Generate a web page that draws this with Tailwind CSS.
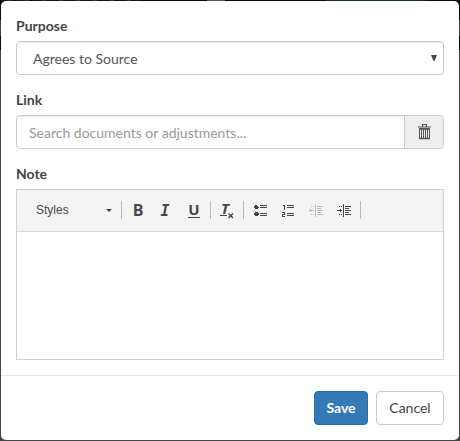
<!DOCTYPE html>
<html lang="en">
<head>
<meta charset="utf-8">
<title>Edit reference</title>
<script src="https://cdn.jsdelivr.net/npm/@tailwindcss/browser@4"></script>
</head>
<body class="h-[441px] w-[460px] overflow-hidden bg-[linear-gradient(#09090f_0_20px,#454547_20px_36px,#09090f_36px_50px,#454547_50px)] p-px font-[Lato,sans-serif] text-[14px] leading-5 text-[#444]">
<div class="absolute left-[326px] top-0 h-px w-[99px] bg-[#172c47]"></div>
<div class="absolute left-0 top-0 h-px w-[141px] bg-[repeating-linear-gradient(90deg,#15151b_0_8px,#3b3538_8px_12px,#101018_12px_17px)]"></div>
<div class="absolute left-[207px] top-0 h-px w-[18px] bg-[#555]"></div>
<main class="flex h-[439px] w-[458px] flex-col rounded-[5px] bg-white">
  <div class="flex h-[374px] flex-col px-[15px] pt-[15px]">
    <label class="h-[25px] font-bold">Purpose</label>
    <div class="flex h-[34px] shrink-0 items-center justify-between rounded border border-[#ccc] pl-4 pr-[6px] text-[14px] text-[#555] shadow-[inset_0_1px_1px_rgba(0,0,0,.075)]">
      <span class="pt-px">Agrees to Source</span>
      <svg class="-mt-px h-[6px] w-[6px]" viewBox="0 0 6 6" fill="#444"><path d="M0 0h6L3.5 6h-1z"/></svg>
    </div>
    <label class="mt-[15px] h-[25px] font-bold">Link</label>
    <div class="flex h-[34px] shrink-0 overflow-hidden rounded border border-[#ccc] text-[14px] shadow-[inset_0_1px_1px_rgba(0,0,0,.075)]">
      <span class="flex flex-1 items-center pl-3 pt-px text-[#999]">Search documents or adjustments...</span>
      <button class="flex w-[39px] items-center justify-center border-l border-[#ccc] bg-[#eee]">
        <svg class="h-[16px] w-[13px]" viewBox="0 0 13 16" fill="none" stroke="#555"><path d="M4.5 2.5v-2h4v2M0 3h13" stroke-width="1.2"/><path d="M1.5 4.5h10v10h-10zM3.5 5v9M5.5 5v9M7.5 5v9M9.5 5v9"/><path d="M1 5h11M1 14.5h11" stroke-width="1.4"/></svg>
      </button>
    </div>
    <label class="mt-[15px] h-[25px] font-bold">Note</label>
    <section class="flex h-[171px] shrink-0 flex-col border border-[#d1d1d1]">
      <div class="flex h-[42px] items-center border-b border-[#d9d9d9] bg-[#f4f4f4] text-[#484848]">
        <span class="ml-[19px] w-[70px] -mt-px font-['Liberation_Sans',sans-serif] text-[12px]">Styles</span>
        <svg class="h-[3px] w-[6px]" viewBox="0 0 6 3" fill="#444"><path d="M0 0h6L3 3z"/></svg>
        <i class="-mt-px ml-[9px] h-[18px] w-px bg-[#bbb]"></i>
        <span class="-mt-px ml-[9px] w-[14px] text-center font-['Open_Sans',sans-serif] text-[16px] font-bold">B</span>
        <span class="ml-[12px] w-[16px] text-center font-['DejaVu_Sans_Mono',monospace] text-[15px] font-bold italic">I</span>
        <span class="ml-[15px] flex h-[14px] w-[12px] items-center justify-center border-b border-[#444] font-['Open_Sans',sans-serif] text-[15px] font-bold"><span class="-mt-[3px]">U</span></span>
        <i class="-mt-px ml-[10px] h-[18px] w-px bg-[#bbb]"></i>
        <span class="relative ml-[9px] h-[16px] w-[14px] pl-px font-['Open_Sans',sans-serif] text-[15px] font-bold italic leading-[11px]">T
          <svg class="absolute left-0 top-0 h-4 w-[14px]" viewBox="0 0 14 16" fill="none" stroke="#444"><path d="M0 12.5h7"/><path d="m8.5 10.5 4.5 4.5m0-4.5-4.5 4.5" stroke-width="1.4"/></svg>
        </span>
        <i class="-mt-px ml-[9px] h-[18px] w-px bg-[#bbb]"></i>
        <svg class="ml-[10px] mt-[2px] h-[14px] w-[14px] shrink-0" viewBox="0 0 14 14" fill="#444"><path d="M1 0h2v1h1v1h1v1H4v1H1V3H0V1h1zM1 7h3v1h1v2H4v1H1v-1H0V8h1zM6 0h7v1H6zM6 2h7v1H6zM6 8h7v1H6zM6 10h7v1H6z"/></svg>
        <svg class="ml-[14px] mt-[2px] h-[14px] w-[13px] shrink-0" viewBox="0 0 13 14" fill="none" stroke="#444" shape-rendering="crispEdges"><path d="M1 .5h1.5V5M0 7.5h2.5v2h-2v2H3M5 .5h7M5 2.5h7M5 8.5h7M5 10.5h7"/></svg>
        <svg class="ml-[14px] h-[14px] w-[15px] shrink-0" viewBox="0 0 15 14" fill="#bbb" shape-rendering="crispEdges"><path d="M6 0h1v13H6zM8 2h6v1H8zM8 4h4v1H8zM8 6h6v1H8zM8 8h4v1H8zM8 10h6v1H8zM2 2h1v1H2zM4 2h1v1H4zM2 10h1v1H2zM4 10h1v1H4zM0 6h5v1H0zM1 5h1v3H1z"/></svg>
        <svg class="ml-[13px] h-[14px] w-[15px] shrink-0" viewBox="0 0 15 14" fill="#444" shape-rendering="crispEdges"><path d="M6 0h1v13H6zM8 2h6v1H8zM8 4h4v1H8zM8 6h6v1H8zM8 8h4v1H8zM8 10h6v1H8zM2 2h1v1H2zM4 2h1v1H4zM2 10h1v1H2zM4 10h1v1H4zM0 6h5v1H0zM3 5h1v3H3z"/></svg>
        <i class="-mt-px ml-[8px] h-[18px] w-px bg-[#bbb]"></i>
      </div>
      <div class="flex-1"></div>
    </section>
  </div>
  <footer class="flex h-[65px] justify-end gap-2 border-t border-[#e5e5e5] px-[15px] pt-[15px] text-[14px]">
    <button class="h-[34px] w-[54px] rounded border border-[#2e6da4] bg-[#337ab7] font-bold text-white">Save</button>
    <button class="h-[34px] w-[68px] rounded border border-[#ccc] bg-white text-[#444]">Cancel</button>
  </footer>
</main>
</body>
</html>
